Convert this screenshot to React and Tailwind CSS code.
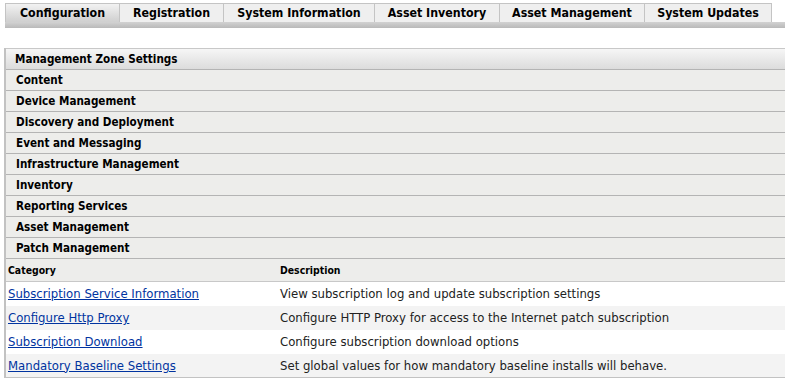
import React from 'react';

const tabs = [
  { label: 'Configuration', w: 'w-[115px]', active: true },
  { label: 'Registration', w: 'w-[104px]' },
  { label: 'System Information', w: 'w-[151px]' },
  { label: 'Asset Inventory', w: 'w-[125px]' },
  { label: 'Asset Management', w: 'w-[145px]' },
  { label: 'System Updates', w: 'w-[127px]' },
];

const sections = [
  'Content',
  'Device Management',
  'Discovery and Deployment',
  'Event and Messaging',
  'Infrastructure Management',
  'Inventory',
  'Reporting Services',
  'Asset Management',
  'Patch Management',
];

const rows = [
  ['Subscription Service Information', 'View subscription log and update subscription settings'],
  ['Configure Http Proxy', 'Configure HTTP Proxy for access to the Internet patch subscription'],
  ['Subscription Download', 'Configure subscription download options'],
  ['Mandatory Baseline Settings', 'Set global values for how mandatory baseline installs will behave.'],
];

export default function App() {
  return (
    <div className="w-[785px] h-[383px] bg-white overflow-hidden text-black font-['DejaVu_Sans_Condensed','DejaVu_Sans',sans-serif]">
      {/* Tabs */}
      <div className="pt-[3px]">
        <div className="flex pl-[5px] h-[19px]">
          {tabs.map((t) => (
            <div
              key={t.label}
              className={`${t.w} flex items-center justify-center text-[12.3px] font-bold border-t border-r border-[#c4c4c4] ${
                t.active ? 'bg-gradient-to-b from-[#f2f2f2] to-[#cfcfcf] border-l' : 'bg-[#efefef]'
              }`}
            >
              {t.label}
            </div>
          ))}
        </div>
        <div className="h-[6px] ml-[5px] bg-gradient-to-b from-[#d2d2d2] to-[#b9b9b9]" />
      </div>

      {/* Panel */}
      <div className="mt-[20px] ml-[4px] border-l-2 border-[#c2c2c2]">
        <div className="h-[22px] flex items-center pl-[9px] pt-[2px] text-[11.6px] font-bold border-t border-[#c8c8c8] border-b border-b-[#b4b4b4] bg-gradient-to-b from-[#f6f6f6] to-[#dcdcdc]">
          Management Zone Settings
        </div>
        {sections.map((s) => (
          <div
            key={s}
            className="h-[21px] flex items-center pl-[10px] pt-[2px] text-[11.6px] font-bold bg-[#ededeb] border-b border-[#b4b4b4]"
          >
            {s}
          </div>
        ))}
        <div className="h-[23px] flex items-center pt-px text-[10.4px] font-bold bg-[#ededeb] border-b border-[#c8c8c8]">
          <div className="w-[274px] pl-[2px]">Category</div>
          <div>Description</div>
        </div>
        {rows.map(([c, d], i) => (
          <div
            key={c}
            className={`h-[24px] flex items-center text-[13px] ${i % 2 ? 'bg-[#f3f3f3]' : 'bg-white'} ${
              i === rows.length - 1 ? 'border-b border-[#c2c2c2]' : ''
            }`}
          >
            <div className="w-[274px] pl-[2px]">
              <a href="#" className="text-[#0033a0] underline">{c}</a>
            </div>
            <div className="text-[#222]">{d}</div>
          </div>
        ))}
      </div>
    </div>
  );
}
